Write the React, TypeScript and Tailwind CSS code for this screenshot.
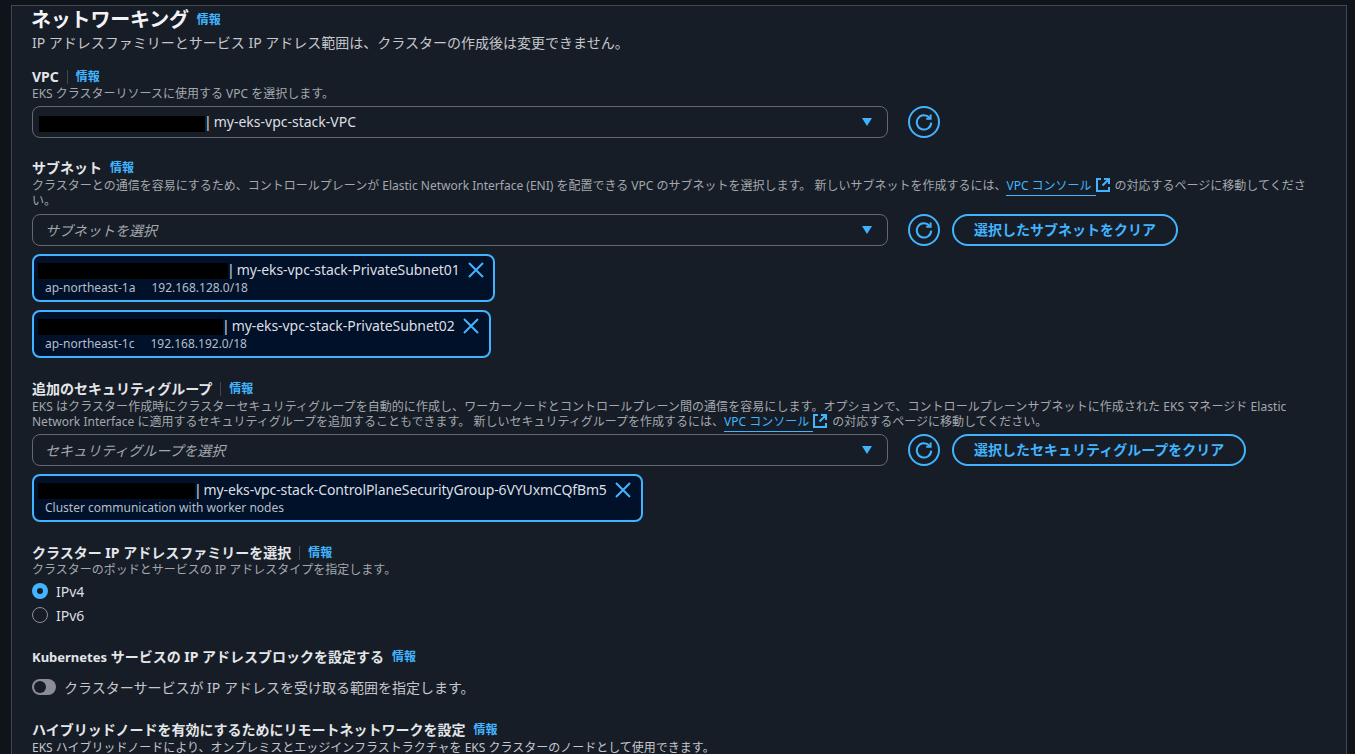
const FONT = "font-['Noto_Sans','Noto_Sans_CJK_JP',sans-serif]";

function Info({ divider = false }: { divider?: boolean }) {
  return (
    <span className="flex items-center">
      {divider ? <span className="mx-[8px] h-[14px] w-px bg-[#424650]" /> : <span className="w-[8px]" />}
      <span className="text-[12px] font-bold leading-[16px] text-[#42b4ff]">情報</span>
    </span>
  );
}

function Label({ text, divider = false }: { text: string; divider?: boolean }) {
  return (
    <div className="flex h-[20px] items-center">
      <span className="text-[14px] font-bold leading-[20px] text-[#e4e6e9]">{text}</span>
      <Info divider={divider} />
    </div>
  );
}

function Caret() {
  return (
    <svg width="12" height="10" viewBox="0 0 12 10" className="shrink-0">
      <path d="M1 1h10L6 9z" fill="#42b4ff" />
    </svg>
  );
}

function Refresh() {
  return (
    <button className="flex h-[32px] w-[32px] shrink-0 items-center justify-center rounded-full border-2 border-[#42b4ff]">
      <svg width="18" height="18" viewBox="0 0 18 18" fill="none" stroke="#42b4ff" strokeWidth="2">
        <path d="M14.4 4.6A7.2 7.2 0 1 0 16.2 9.6" />
        <path d="M15.6 1.4v4.4h-4.4" />
      </svg>
    </button>
  );
}

function External() {
  return (
    <svg width="14" height="14" viewBox="0 0 14 14" fill="none" stroke="#42b4ff" strokeWidth="2" className="mr-[5px] inline-block align-[-2px]">
      <path d="M5 1H1v12h12V9M8 1h5v5M13 1L6.5 7.5" />
    </svg>
  );
}

function Link() {
  return <span className="border-b border-[#42b4ff] pb-[1px] pr-[4px] text-[#42b4ff]">VPC コンソール</span>;
}

function Select({ placeholder, children }: { placeholder?: string; children?: React.ReactNode }) {
  return (
    <div className="flex h-[32px] w-[856px] shrink-0 items-center justify-between rounded-[8px] border border-[#656871] pr-[14px]">
      {placeholder ? (
        <span className="pl-[12px] text-[14px] italic text-[#a4a8ae]">{placeholder}</span>
      ) : (
        children
      )}
      <Caret />
    </div>
  );
}

function Redacted({ width, offset }: { width: number; offset: string }) {
  return <span className={`h-[16px] shrink-0 bg-black ${offset}`} style={{ width }} />;
}

function Name({ children, tracking = "" }: { children: React.ReactNode; tracking?: string }) {
  return (
    <span className={`flex whitespace-nowrap text-[14px] leading-[20px] text-[#dedfe3] ${tracking}`}>
      <span className="-ml-[1px]">|</span>
      <span className="ml-[2px]">{children}</span>
    </span>
  );
}

function Token({ redact, name, width, tracking, children }: { redact: number; name: string; width: number; tracking: string; children: React.ReactNode }) {
  return (
    <div className="flex h-[48px] flex-col rounded-[8px] border-2 border-[#42b4ff] bg-[#001129] pl-[4px] pt-[4px]" style={{ width }}>
      <div className="flex h-[20px] items-center">
        <Redacted width={redact} offset="mt-[2px]" />
        <Name tracking={tracking}>{name}</Name>
        <svg width="16" height="16" viewBox="0 0 16 16" fill="none" stroke="#42b4ff" strokeWidth="2" className="ml-[8px] shrink-0">
          <path d="M1 1l14 14M15 1L1 15" />
        </svg>
      </div>
      <div className="flex h-[16px] gap-[16px] pl-[7px] text-[12px] leading-[16px] text-[#b6bec9]">{children}</div>
    </div>
  );
}

function ClearButton({ text }: { text: string }) {
  return (
    <button className="ml-[12px] h-[32px] rounded-full border-2 border-[#42b4ff] px-[20px] text-[14px] font-bold leading-[28px] text-[#42b4ff]">
      {text}
    </button>
  );
}

export default function App() {
  return (
    <div className={`h-[754px] w-[1355px] overflow-hidden bg-[#0f141a] pt-[5px] ${FONT}`}>
      <div className="ml-[11px] h-[749px] w-[1336px] border-x border-t border-[#424650] bg-[#161d26] pl-[20px]">
        <div className="flex h-[26px] items-center pt-[1px]">
          <h2 className="-ml-[1px] text-[20px] font-bold leading-[26px] tracking-[-0.2px] text-[#f3f3f7]">ネットワーキング</h2>
          <Info />
        </div>
        <p className="mt-[1px] h-[20px] text-[14px] leading-[20px] text-[#c6c6cd]">
          IP アドレスファミリーとサービス IP アドレス範囲は、クラスターの作成後は変更できません。
        </p>

        <div className="mt-[14px]">
          <Label text="VPC" divider />
          <p className="h-[14px] text-[12px] leading-[14px] text-[#a4a8ae]">EKS クラスターリソースに使用する VPC を選択します。</p>
          <div className="mt-[5px] flex items-center gap-[20px]">
            <Select>
              <span className="flex items-center pl-[6px]">
                <Redacted width={166} offset="mt-[4px]" />
                <span>
                  <Name>my-eks-vpc-stack-VPC</Name>
                </span>
              </span>
            </Select>
            <Refresh />
          </div>
        </div>

        <div className="mt-[20px]">
          <Label text="サブネット" />
          <p className="w-[1290px] text-[12px] leading-[15px] text-[#a4a8ae]">
            クラスターとの通信を容易にするため、コントロールプレーンが Elastic Network Interface (ENI) を配置できる VPC のサブネットを選択します。 新しいサブネットを作成するには、<Link /><External />の対応するページに移動してください。
          </p>
          <div className="mt-[6px] flex items-center">
            <Select placeholder="サブネットを選択" />
            <span className="w-[20px]" />
            <Refresh />
            <ClearButton text="選択したサブネットをクリア" />
          </div>
          <div className="mt-[8px] flex flex-col gap-[8px]">
            <Token redact={190} name="my-eks-vpc-stack-PrivateSubnet01" width={463} tracking="tracking-[-0.06px]">
              <span>ap-northeast-1a</span>
              <span>192.168.128.0/18</span>
            </Token>
            <Token redact={185} name="my-eks-vpc-stack-PrivateSubnet02" width={459} tracking="tracking-[-0.06px]">
              <span>ap-northeast-1c</span>
              <span>192.168.192.0/18</span>
            </Token>
          </div>
        </div>

        <div className="mt-[21px]">
          <Label text="追加のセキュリティグループ" divider />
          <p className="w-[1290px] text-[12px] leading-[15px] text-[#a4a8ae]">
            <span className="tracking-[0.06px]">EKS はクラスター作成時にクラスターセキュリティグループを自動的に作成し、ワーカーノードとコントロールプレーン間の通信を容易にします。オプションで、コントロールプレーンサブネットに作成された EKS マネージド Elastic</span> Network Interface に適用するセキュリティグループを追加することもできます。 新しいセキュリティグループを作成するには、<Link /><External />の対応するページに移動してください。
          </p>
          <div className="mt-[5px] flex items-center">
            <Select placeholder="セキュリティグループを選択" />
            <span className="w-[20px]" />
            <Refresh />
            <ClearButton text="選択したセキュリティグループをクリア" />
          </div>
          <div className="mt-[8px]">
            <Token redact={157} name="my-eks-vpc-stack-ControlPlaneSecurityGroup-6VYUxmCQfBm5" width={611} tracking="tracking-[-0.12px]">
              <span>Cluster communication with worker nodes</span>
            </Token>
          </div>
        </div>

        <div className="mt-[21px]">
          <Label text="クラスター IP アドレスファミリーを選択" divider />
          <p className="h-[14px] text-[12px] leading-[14px] text-[#a4a8ae]">クラスターのポッドとサービスの IP アドレスタイプを指定します。</p>
          <div className="mt-[2px] flex h-[24px] items-center gap-[8px]">
            <span className="flex h-[16px] w-[16px] items-center justify-center rounded-full bg-[#42b4ff]">
              <span className="h-[6px] w-[6px] rounded-full bg-[#161d26]" />
            </span>
            <span className="text-[14px] text-[#dedfe3]">IPv4</span>
          </div>
          <div className="flex h-[24px] items-center gap-[8px]">
            <span className="h-[16px] w-[16px] rounded-full border border-[#8c8c94]" />
            <span className="text-[14px] text-[#dedfe3]">IPv6</span>
          </div>
        </div>

        <div className="mt-[20px]">
          <div className="flex h-[20px] items-center">
            <span className="text-[14px] font-bold leading-[20px] text-[#e4e6e9]"><span className="text-[13px]">Kubernetes</span> サービスの IP アドレスブロックを設定する</span>
            <Info />
          </div>
          <div className="mt-[10px] flex h-[20px] items-center gap-[8px]">
            <span className="flex h-[16px] w-[24px] items-center rounded-full bg-[#8c8c94] pl-[2px]">
              <span className="h-[12px] w-[12px] rounded-full bg-[#161d26]" />
            </span>
            <span className="text-[14px] text-[#c6c6cd]">クラスターサービスが IP アドレスを受け取る範囲を指定します。</span>
          </div>
        </div>

        <div className="mt-[23px]">
          <div className="flex h-[20px] items-center">
            <span className="text-[14px] font-bold leading-[20px] text-[#e4e6e9]">ハイブリッドノードを有効にするためにリモートネットワークを設定</span>
            <Info />
          </div>
          <p className="h-[16px] text-[12px] leading-[16px] text-[#c6c6cd]">EKS ハイブリッドノードにより、オンプレミスとエッジインフラストラクチャを EKS クラスターのノードとして使用できます。</p>
        </div>
      </div>
    </div>
  );
}
